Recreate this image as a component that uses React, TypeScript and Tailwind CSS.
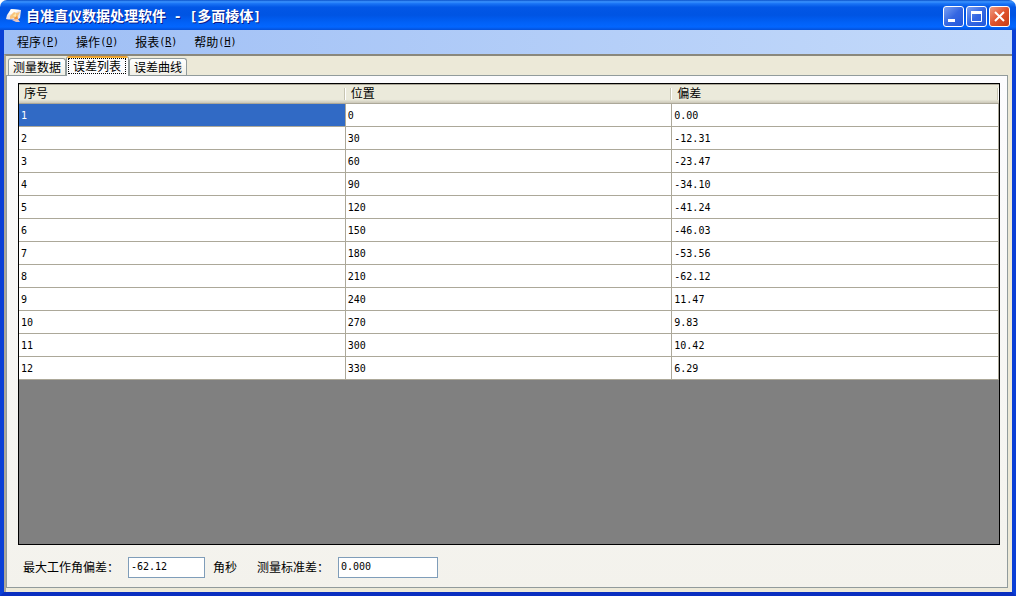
import {useState} from "react";
import type {ReactNode} from "react";

type ErrorRow = {
    position: string;
    deviation: string;
}

const rows: ErrorRow[] = [
    {position: "0", deviation: "0.00"},
    {position: "30", deviation: "-12.31"},
    {position: "60", deviation: "-23.47"},
    {position: "90", deviation: "-34.10"},
    {position: "120", deviation: "-41.24"},
    {position: "150", deviation: "-46.03"},
    {position: "180", deviation: "-53.56"},
    {position: "210", deviation: "-62.12"},
    {position: "240", deviation: "11.47"},
    {position: "270", deviation: "9.83"},
    {position: "300", deviation: "10.42"},
    {position: "330", deviation: "6.29"},
];

const menus = [
    {label: "程序", hotkey: "P"},
    {label: "操作", hotkey: "O"},
    {label: "报表", hotkey: "R"},
    {label: "帮助", hotkey: "H"},
];

const tabs = ["测量数据", "误差列表", "误差曲线"];
const columns = ["序号", "位置", "偏差"];

const mono = "font-['DejaVu_Sans_Mono','Noto_Sans_CJK_SC',monospace]";

function AppIcon() {
    return (
        <svg viewBox="0 0 16 16" className="size-4" aria-hidden="true">
            <path d="M5 1 L15 2 L14 10 L11 12 L0 11 L1 7 Z" fill="#e9e4ea"/>
            <path d="M5 1 L14 2 L8 5 L2 7 Z" fill="#fffdf8"/>
            <path d="M4 8 L8 4 L10 5 L14 4 L12 8 L12 11 L8 10 L4 11 Z" fill="#f9c47c"/>
            <path d="M7 8 L10 5 L10 9 Z" fill="#ffe9a8"/>
            <path d="M8 10 L11 8 L12 11 L9 12 Z" fill="#ef9440"/>
            <path d="M6 12 L12 11 L14 14 L10 14 Z" fill="#e8c4bc"/>
            <path d="M0 11 L6 11 L3 12 Z" fill="#8d9bd0"/>
        </svg>
    );
}

type CaptionButtonProps = {
    label: string;
    close?: boolean;
    children: ReactNode;
}

function CaptionButton({label, close, children}: CaptionButtonProps) {
    const color = close
        ? "from-[#ee9a80] via-[#e0522c] to-[#c53c14]"
        : "from-[#7a9ff2] via-[#3567e2] to-[#2257dc]";

    return (
        <button
            type="button"
            aria-label={label}
            className={`flex size-[21px] items-center justify-center rounded-[3px] border border-white bg-linear-to-br ${color}`}
        >
            <svg viewBox="0 0 19 19" className="size-[19px]" fill="none" stroke="white">
                {children}
            </svg>
        </button>
    );
}

function TitleBar() {
    return (
        <header className="flex h-[30px] items-center rounded-t-[7px] bg-[linear-gradient(#0a51c9_0%,#3a93ff_6%,#1a74f5_12%,#0257e6_24%,#0054e3_50%,#0161f7_75%,#0366ff_90%,#0450d8_100%)] pt-px pr-[6px] pl-[6px]">
            <AppIcon/>
            <h1 className="ml-[4px] flex-1 text-[14px] leading-[20px] font-bold whitespace-pre text-white [text-shadow:1px_1px_0_#0a1e8c]">
                自准直仪数据处理软件
                <span className={`${mono} text-[13px]`}> - [</span>
                多面棱体
                <span className={`${mono} text-[13px]`}>]</span>
            </h1>
            <div className="flex gap-[2px] pt-[2px]">
                <CaptionButton label="最小化">
                    <path d="M4 13.5h7" strokeWidth="3"/>
                </CaptionButton>
                <CaptionButton label="最大化">
                    <path d="M4.5 5v9.5h10V5" strokeWidth="1"/>
                    <path d="M4 5.5h11" strokeWidth="3"/>
                </CaptionButton>
                <CaptionButton label="关闭" close>
                    <path d="M5 5l9 9M14 5l-9 9" strokeWidth="2"/>
                </CaptionButton>
            </div>
        </header>
    );
}

function MenuBar() {
    return (
        <nav className="flex h-6 items-center gap-[17px] bg-linear-to-r from-[#9ebef5] to-[#c4dafa] pl-[13px]">
            {menus.map(({label, hotkey}) => (
                <button key={hotkey} type="button" className="flex items-center leading-4">
                    {label}
                    <span className={`${mono} text-[10px]`}>(<u>{hotkey}</u>)</span>
                </button>
            ))}
        </nav>
    );
}

function ErrorTable() {
    const [selected, setSelected] = useState(0);

    return (
        <div className="flex-1 border border-black bg-[#808080]">
            <table className="w-full table-fixed border-separate border-spacing-0">
                <thead>
                    <tr>
                        {columns.map((column) => (
                            <th
                                key={column}
                                className="h-5 border-t border-b border-t-[#aca899] border-b-[#aca899] bg-[linear-gradient(#ebeadb_80%,#cbc7b8)] p-0 text-left font-normal"
                            >
                                <div className="flex h-[18px] items-center justify-between pl-[5px]">
                                    <span className="pb-[2px]">{column}</span>
                                    <span className="h-3 border-r border-l border-r-white border-l-[#c7c5b2]"/>
                                </div>
                            </th>
                        ))}
                    </tr>
                </thead>
                <tbody className={`${mono} text-[10px]`}>
                    {rows.map(({position, deviation}, index) => (
                        <tr key={position} className="bg-white" onClick={() => setSelected(index)}>
                            <td className={`h-[23px] border-r border-b border-[#aca899] p-0 pt-px pl-[2px] ${index === selected ? "bg-[#316ac5] text-white" : ""}`}>
                                {index + 1}
                            </td>
                            <td className="border-r border-b border-[#aca899] p-0 pt-px pl-[2px]">{position}</td>
                            <td className="border-r border-b border-[#aca899] p-0 pt-px pl-[2px]">{deviation}</td>
                        </tr>
                    ))}
                </tbody>
            </table>
        </div>
    );
}

function Summary() {
    const field = `${mono} h-[21px] border border-[#7f9db9] bg-white pb-[2px] pl-[2px] text-[10px] outline-none`;

    return (
        <div className="flex items-center pt-3 pb-[9px] pl-[5px]">
            <label htmlFor="max-deviation" className="w-[105px] pb-[2px]">最大工作角偏差：</label>
            <input id="max-deviation" className={`${field} w-[77px]`} defaultValue="-62.12"/>
            <span className="ml-2 pb-[2px]">角秒</span>
            <label htmlFor="std-deviation" className="ml-5 w-[81px] pb-[2px]">测量标准差：</label>
            <input id="std-deviation" className={`${field} w-[100px]`} defaultValue="0.000"/>
        </div>
    );
}

export default function App() {
    const [activeTab, setActiveTab] = useState("误差列表");

    return (
        <div className="flex min-h-screen flex-col bg-white font-['Noto_Sans_CJK_SC',sans-serif] text-[12px] leading-4 text-black">
            <TitleBar/>
            <div className="flex flex-1 flex-col border-x-4 border-b-4 border-x-[#0a3fd6] border-b-[#0a2fc0]">
                <MenuBar/>
                <main className="flex flex-1 flex-col border-t-2 border-l-2 border-t-[#8a887c] border-l-[#aca899] bg-[#ece9d8] pr-[4px] pb-[4px]">
                    <div role="tablist" className="flex h-[19px] items-end pl-[2px]">
                        {tabs.map((tab) => tab === activeTab ? (
                            <button
                                key={tab}
                                type="button"
                                role="tab"
                                aria-selected="true"
                                className="z-10 -mb-px flex h-5 flex-col overflow-hidden rounded-t-[3px] border-x border-x-[#919b9c] bg-[#fcfcfe]"
                            >
                                <span className="h-[2px] w-full bg-linear-to-b from-[#e68b2c] to-[#ffc73c]"/>
                                <span className="mr-[2px] ml-px h-4 border border-dotted border-black px-[4px] leading-[14px]">{tab}</span>
                            </button>
                        ) : (
                            <button
                                key={tab}
                                type="button"
                                role="tab"
                                aria-selected="false"
                                onClick={() => setActiveTab(tab)}
                                className="h-[17px] rounded-t-[3px] border-x border-t border-[#919b9c] bg-linear-to-b from-white to-[#f0efe6] px-[4px]"
                            >
                                {tab}
                            </button>
                        ))}
                    </div>
                    <section className="flex flex-1 flex-col border border-[#919b9c] bg-linear-to-b from-[#fcfcfe] to-[#f3f2ec] px-[7px] pt-[7px] pl-[11px]">
                        <ErrorTable/>
                        <Summary/>
                    </section>
                </main>
            </div>
        </div>
    );
}
